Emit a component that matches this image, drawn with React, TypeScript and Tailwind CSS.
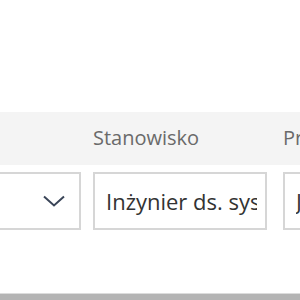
import React from 'react';

export default function App() {
  return (
    <div className="w-[300px] h-[300px] overflow-hidden bg-white font-['Open_Sans',sans-serif] flex flex-col">
      <div className="h-[112px] shrink-0" />
      {/* header row */}
      <div className="h-[53px] shrink-0 bg-[#f4f4f4] flex items-center ml-[-100px]">
        <div className="w-[181px] shrink-0" />
        <div className="w-[190px] shrink-0 pl-[12px] text-[20px] text-[#6a6a6a] leading-none pb-[2px]">Stanowisko</div>
        <div className="shrink-0 pl-[12px] text-[20px] text-[#6a6a6a] leading-none pb-[2px] whitespace-nowrap">Przełożony</div>
      </div>
      {/* input row */}
      <div className="flex mt-[7px] ml-[-100px] h-[58px] shrink-0">
        <div className="w-[181px] shrink-0 border-2 border-[#d6d6d6] flex items-center justify-end pr-[14px]">
          <svg width="22" height="12" viewBox="0 0 22 12" fill="none">
            <path d="M1 1.5 L11 10.5 L21 1.5" stroke="#3a4558" strokeWidth="2" />
          </svg>
        </div>
        <div className="w-[174px] shrink-0 ml-[12px] border-2 border-[#d6d6d6] flex items-center pl-[11px] pr-[8px]">
          <div className="w-full overflow-hidden">
            <span className="text-[22px] text-[#333] whitespace-nowrap">Inżynier ds. systemów</span>
          </div>
        </div>
        <div className="w-[174px] shrink-0 ml-[16px] border-2 border-[#d6d6d6] flex items-center pl-[11px] pr-[8px]">
          <div className="w-full overflow-hidden">
            <span className="text-[22px] text-[#333] whitespace-nowrap">Jan Kowalski</span>
          </div>
        </div>
      </div>
      <div className="flex-1" />
      <div className="h-[7px] shrink-0 bg-[#b4b4b4] border-t border-[#dcdcdc]" />
    </div>
  );
}
